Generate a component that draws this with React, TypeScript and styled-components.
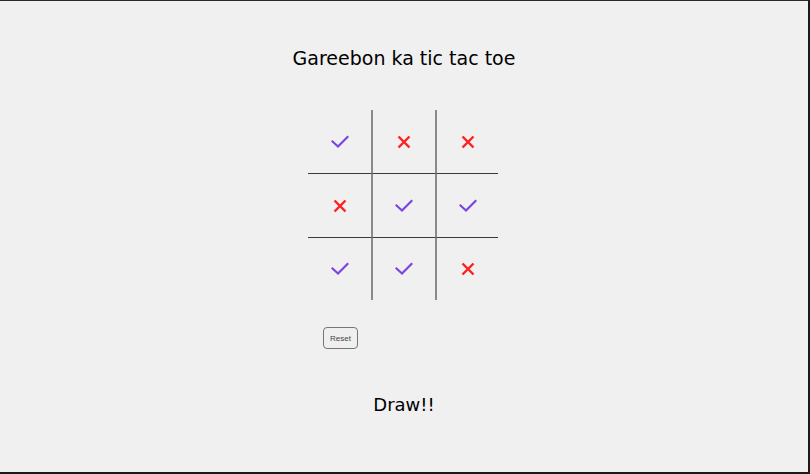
import React, { useState } from 'react'
import styled, { createGlobalStyle } from 'styled-components'

type Mark = 'check' | 'cross'

const initialBoard: Mark[] = [
  'check', 'cross', 'cross',
  'cross', 'check', 'check',
  'check', 'check', 'cross',
]

const GlobalStyle = createGlobalStyle`
  html, body {
    margin: 0;
    padding: 0;
    background: #f0f0f0;
  }
`

const CheckIcon = () => (
  <svg width="18" height="14" viewBox="0 0 18 14">
    <path d="M1.5 6.5 L7 11.5 L16.5 2" fill="none" stroke="#7a45e0" strokeWidth="2.2" strokeLinecap="square" />
  </svg>
)

const CrossIcon = () => (
  <svg width="14" height="14" viewBox="0 0 14 14">
    <path d="M1.5 1.5 L12.5 12.5 M12.5 1.5 L1.5 12.5" fill="none" stroke="#ff1f1f" strokeWidth="2.4" />
  </svg>
)

const App = () => {
  const [board, setBoard] = useState<Mark[]>(initialBoard)

  return (
    <Frame>
      <GlobalStyle />
      <Title>Gareebon ka tic tac toe</Title>
      <Board>
        {board.map((mark, i) => (
          <Cell key={i} col={i % 3} row={Math.floor(i / 3)}>
            {mark === 'check' ? <CheckIcon /> : <CrossIcon />}
          </Cell>
        ))}
      </Board>
      <Controls>
        <ResetButton onClick={() => setBoard(initialBoard)}>Reset</ResetButton>
      </Controls>
      <Status>Draw!!</Status>
    </Frame>
  )
}

export default App

const Frame = styled.div`
  box-sizing: border-box;
  width: 810px;
  height: 474px;
  border-top: 1px solid #2b2b2b;
  border-right: 2px solid #1a1a1a;
  border-bottom: 2px solid #1a1a1a;
  background: #f0f0f0;
  display: flex;
  flex-direction: column;
  align-items: center;
  font-family: 'Comic Sans MS', 'DejaVu Sans', sans-serif;
  color: #000;
`

const Title = styled.h1`
  margin: 44px 0 0;
  font-size: 19px;
  font-weight: normal;
  line-height: 26px;
`

const Board = styled.div`
  margin-top: 39px;
  margin-right: 2px;
  display: grid;
  grid-template-columns: 63px 64px 63px;
  grid-template-rows: 63px 64px 63px;
`

const Cell = styled.div<{ col: number; row: number }>`
  display: flex;
  align-items: center;
  justify-content: center;
  box-sizing: border-box;
  border-left: ${({ col }) => (col > 0 ? '2px solid #8a8a8a' : 'none')};
  border-top: ${({ row }) => (row > 0 ? '1px solid #3a3a3a' : 'none')};
`

const Controls = styled.div`
  width: 190px;
  margin-top: 27px;
  margin-right: 2px;
  padding-left: 15px;
  box-sizing: border-box;
`

const ResetButton = styled.button`
  display: block;
  width: 35px;
  height: 22px;
  padding: 0;
  font-family: 'Liberation Sans', Arial, sans-serif;
  font-size: 8px;
  color: #444;
  background: #efefef;
  border: 1px solid #767676;
  border-radius: 4px;
`

const Status = styled.div`
  margin-top: 43px;
  font-size: 18px;
  line-height: 26px;
`
